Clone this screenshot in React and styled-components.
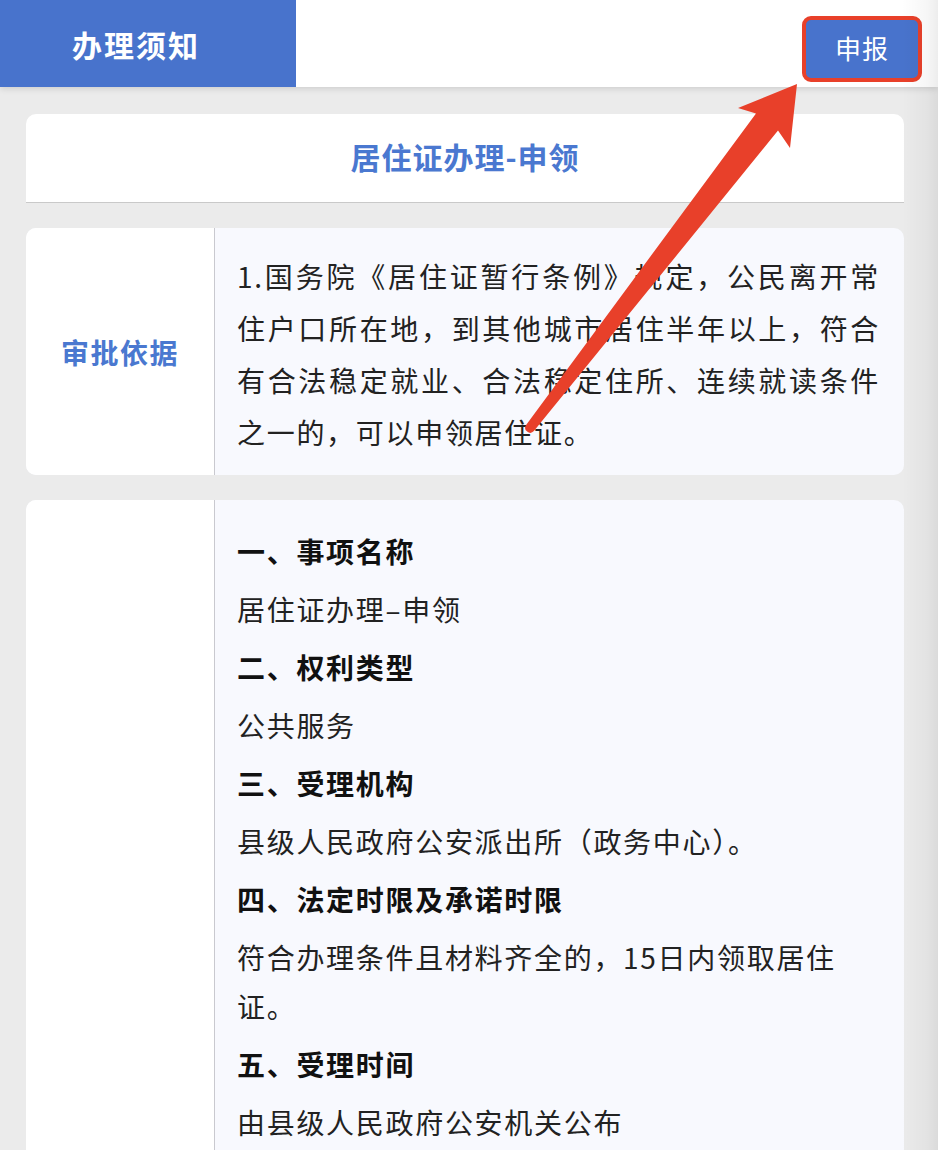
import React from "react";
import styled, { createGlobalStyle } from "styled-components";

const Global = createGlobalStyle`
  html, body { margin: 0; padding: 0; }
  body {
    background: #ebebeb;
    font-family: "Noto Sans CJK SC", "Noto Sans", sans-serif;
    color: #222;
  }
`;

const Page = styled.div`
  position: relative;
  width: 938px;
  height: 1150px;
  overflow: hidden;
  background: #ebebeb;
  display: flex;
  flex-direction: column;
`;

const Header = styled.header`
  flex: none;
  height: 87px;
  background: #fff;
  display: flex;
  align-items: stretch;
  justify-content: space-between;
  box-shadow: 0 2px 6px rgba(0, 0, 0, 0.12);
  position: relative;
  z-index: 1;
`;

const Tab = styled.div`
  width: 296px;
  background: #4873cc;
  color: #fff;
  font-size: 30px;
  font-weight: 700;
  letter-spacing: 2px;
  display: flex;
  align-items: center;
  padding-left: 72px;
  box-sizing: border-box;
`;

const ReportButton = styled.button`
  align-self: center;
  margin-right: 16px;
  margin-top: 10px;
  width: 120px;
  height: 66px;
  box-sizing: border-box;
  border: 4px solid #e8402a;
  border-radius: 9px;
  background: #4873cc;
  box-shadow: inset 0 0 0 2px #4873cc;
  color: #fff;
  font-family: inherit;
  font-size: 26px;
  letter-spacing: 1px;
  padding: 0 0 2px;
`;

const Content = styled.main`
  flex: 1;
  min-height: 0;
  padding: 27px 34px 0 26px;
  display: flex;
  flex-direction: column;
  gap: 25px;
`;

const TitleCard = styled.div`
  flex: none;
  box-sizing: border-box;
  height: 89px;
  background: #fff;
  border-radius: 10px 10px 0 0;
  border-bottom: 1px solid #c9c9c9;
  display: flex;
  align-items: center;
  justify-content: center;
  color: #4a78d0;
  font-size: 30px;
  font-weight: 700;
  letter-spacing: 1px;
  padding-bottom: 4px;
`;

const Card = styled.section`
  flex: ${(p) => (p.$fill ? 1 : "none")};
  display: grid;
  grid-template-columns: 189px 1fr;
  background: #f8f9fe;
  border-radius: ${(p) => (p.$fill ? "10px 10px 0 0" : "10px")};
  overflow: hidden;
`;

const Label = styled.div`
  background: #fff;
  border-right: 1px solid #c9c9cf;
  display: flex;
  align-items: center;
  justify-content: center;
  color: #4a78d0;
  font-size: 28px;
  font-weight: 700;
  letter-spacing: 1.5px;
`;

const Body = styled.div`
  padding: ${(p) => p.$pad};
  font-size: 28px;
  letter-spacing: 1.7px;
  line-height: ${(p) => p.$lh}px;
  text-align: ${(p) => (p.$justify ? "justify" : "left")};
  color: #222;
`;

const Para = styled.p`
  margin: 0 0 9px;
  font-weight: ${(p) => (p.$bold ? 700 : 400)};
  color: ${(p) => (p.$bold ? "#111" : "#222")};
`;

const Shade = styled.div`
  position: absolute;
  top: 0;
  right: 0;
  width: 36px;
  height: 100%;
  pointer-events: none;
  z-index: 2;
  background: linear-gradient(to right, rgba(0, 0, 0, 0) 0%, rgba(0, 0, 0, 0.035) 70%, rgba(0, 0, 0, 0.07) 100%);
`;

const ArrowLayer = styled.svg`
  position: absolute;
  top: 0;
  left: 0;
  width: 938px;
  height: 1150px;
  pointer-events: none;
  z-index: 3;
`;

const items = [
  ["一、事项名称", true],
  ["居住证办理–申领", false],
  ["二、权利类型", true],
  ["公共服务", false],
  ["三、受理机构", true],
  ["县级人民政府公安派出所（政务中心）。", false],
  ["四、法定时限及承诺时限", true],
  ["符合办理条件且材料齐全的，15日内领取居住证。", false],
  ["五、受理时间", true],
  ["由县级人民政府公安机关公布", false],
];

export default function App() {
  return (
    <Page>
      <Global />
      <Header>
        <Tab>办理须知</Tab>
        <ReportButton>申报</ReportButton>
      </Header>
      <Content>
        <TitleCard>居住证办理-申领</TitleCard>
        <Card>
          <Label>审批依据</Label>
          <Body $pad="22px 24px 17px 22px" $lh={52} $justify>
            1.国务院《居住证暂行条例》规定，公民离开常住户口所在地，到其他城市居住半年以上，符合有合法稳定就业、合法稳定住所、连续就读条件之一的，可以申领居住证。
          </Body>
        </Card>
        <Card $fill>
          <Label />
          <Body $pad="27px 22px 0 22px" $lh={49}>
            {items.map(([t, b], i) => (
              <Para key={i} $bold={b}>
                {t}
              </Para>
            ))}
          </Body>
        </Card>
      </Content>
      <Shade />
      <ArrowLayer viewBox="0 0 938 1150">
        <path
          d="M797 84 L790 148 L778 130.6 L533.9 431.1 A5 5 0 0 1 526.1 424.9 L756 113.4 L738 108 Z"
          fill="#e8402a"
        />
      </ArrowLayer>
    </Page>
  );
}
